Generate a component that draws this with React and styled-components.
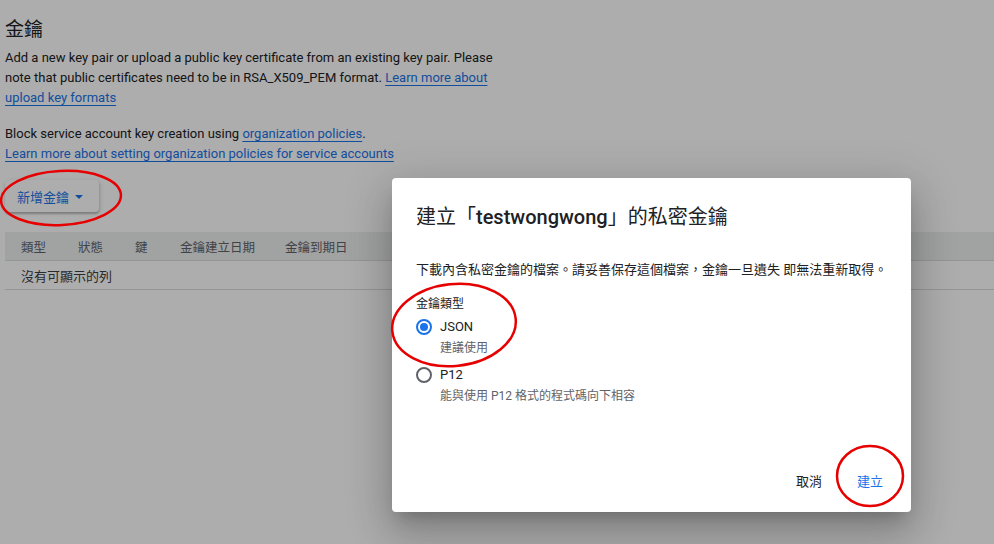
import styled, { createGlobalStyle } from 'styled-components'

const GlobalStyle = createGlobalStyle`
  html, body {
    margin: 0;
    padding: 0;
    background: #fff;
  }
  body {
    font-family: Roboto, "Noto Sans CJK TC", "Noto Sans", sans-serif;
    color: #202124;
    -webkit-font-smoothing: antialiased;
  }
`

const Page = styled.div`
  position: relative;
  width: 994px;
  height: 544px;
  overflow: hidden;
  padding: 15px 0 0 5px;
  box-sizing: border-box;
`

const Title = styled.h2`
  margin: 0 0 3px;
  font-size: 19px;
  font-weight: 400;
  line-height: 30px;
`

const Para = styled.p`
  margin: 0 0 16px;
  width: 500px;
  font-size: 13px;
  line-height: 20px;
`

const Link = styled.a`
  color: #1a73e8;
  text-decoration: underline;
  text-underline-offset: 3px;
`

const AddButton = styled.button`
  display: inline-flex;
  align-items: center;
  gap: 6px;
  height: 32px;
  margin: 0 0 20px;
  padding: 0 16px 0 12px;
  border: none;
  border-radius: 4px;
  background: #fff;
  color: #1a73e8;
  font-family: inherit;
  font-size: 13px;
  box-shadow: 0 2px 2px rgba(0, 0, 0, 0.2), 1px 1px 4px rgba(0, 0, 0, 0.15);
`

const Caret = styled.span`
  width: 0;
  height: 0;
  border-left: 4px solid transparent;
  border-right: 4px solid transparent;
  border-top: 4px solid currentColor;
  margin-top: 1px;
`

const Table = styled.div`
  display: flex;
  flex-direction: column;
`

const HeadRow = styled.div`
  display: flex;
  align-items: center;
  height: 28px;
  padding-left: 16px;
  background: #eef0f1;
  border-bottom: 1px solid #dadce0;
  color: #5f6368;
  font-size: 12.5px;
`

const HeadCell = styled.div`
  width: ${(p) => p.$w}px;
`

const BodyRow = styled.div`
  display: flex;
  align-items: center;
  height: 28px;
  padding-left: 16px;
  border-bottom: 1px solid #dadce0;
  color: #3c4043;
  font-size: 13px;
`

const Scrim = styled.div`
  position: absolute;
  inset: 0;
  background: rgba(0, 0, 0, 0.32);
`

const Dialog = styled.div`
  position: absolute;
  left: 392px;
  top: 178px;
  width: 519px;
  height: 334px;
  box-sizing: border-box;
  background: #fff;
  border-radius: 4px;
  padding: 24px 16px 0 24px;
  display: flex;
  flex-direction: column;
  box-shadow: 0 11px 15px -7px rgba(0, 0, 0, 0.2),
    0 24px 38px 3px rgba(0, 0, 0, 0.14), 0 9px 46px 8px rgba(0, 0, 0, 0.12);
`

const DialogTitle = styled.h3`
  margin: 0;
  font-size: 20px;
  font-weight: 400;
  line-height: 30px;
  color: #202124;
`

const Strong = styled.span`
  font-weight: 500;
`

const Desc = styled.p`
  margin: 28px 0 0;
  font-size: 13px;
  line-height: 20px;
  white-space: nowrap;
`

const GroupLabel = styled.div`
  margin-top: 16px;
  font-size: 12px;
  line-height: 16px;
`

const Options = styled.div`
  display: flex;
  flex-direction: column;
  gap: 7px;
  margin-top: 5px;
`

const Option = styled.label`
  display: grid;
  grid-template-columns: 24px 1fr;
  align-items: center;
`

const Radio = styled.span`
  width: 16px;
  height: 16px;
  box-sizing: border-box;
  border-radius: 50%;
  border: 2px solid ${(p) => (p.$on ? '#1a73e8' : '#5f6368')};
  display: flex;
  align-items: center;
  justify-content: center;

  &::after {
    content: '';
    width: 8px;
    height: 8px;
    border-radius: 50%;
    background: ${(p) => (p.$on ? '#1a73e8' : 'transparent')};
  }
`

const OptionName = styled.span`
  font-size: 13px;
  line-height: 20px;
  color: #202124;
`

const OptionHint = styled.span`
  grid-column: 2;
  margin-top: 1px;
  font-size: 12px;
  line-height: 20px;
  color: #5f6368;
`

const Actions = styled.div`
  margin-top: auto;
  display: flex;
  justify-content: flex-end;
  gap: 11px;
  padding-bottom: 14px;
`

const TextButton = styled.button`
  height: 36px;
  padding: 0 12px;
  border: none;
  background: transparent;
  font-family: inherit;
  font-size: 13px;
  color: ${(p) => (p.$primary ? '#1a73e8' : '#202124')};
`

const Marks = styled.svg`
  position: absolute;
  inset: 0;
  pointer-events: none;
`

const columns = [
  ['類型', 57],
  ['狀態', 57],
  ['鍵', 45],
  ['金鑰建立日期', 105],
  ['金鑰到期日', 120],
]

export default function App() {
  return (
    <>
      <GlobalStyle />
      <Page>
        <Title>金鑰</Title>
        <Para>
          Add a new key pair or upload a public key certificate from an existing key pair. Please
          note that public certificates need to be in RSA_X509_PEM format.{' '}
          <Link>Learn more about upload key formats</Link>
        </Para>
        <Para>
          Block service account key creation using <Link>organization policies</Link>.
          <br />
          <Link>Learn more about setting organization policies for service accounts</Link>
        </Para>
        <AddButton>
          新增金鑰
          <Caret />
        </AddButton>
        <Table>
          <HeadRow>
            {columns.map(([name, w]) => (
              <HeadCell key={name} $w={w}>
                {name}
              </HeadCell>
            ))}
          </HeadRow>
          <BodyRow>沒有可顯示的列</BodyRow>
        </Table>

        <Scrim />

        <Dialog>
          <DialogTitle>
            建立「<Strong>testwongwong</Strong>」的私密金鑰
          </DialogTitle>
          <Desc>下載內含私密金鑰的檔案。請妥善保存這個檔案，金鑰一旦遺失 即無法重新取得。</Desc>
          <GroupLabel>金鑰類型</GroupLabel>
          <Options>
            <Option>
              <Radio $on />
              <OptionName>JSON</OptionName>
              <OptionHint>建議使用</OptionHint>
            </Option>
            <Option>
              <Radio />
              <OptionName>P12</OptionName>
              <OptionHint>能與使用 P12 格式的程式碼向下相容</OptionHint>
            </Option>
          </Options>
          <Actions>
            <TextButton>取消</TextButton>
            <TextButton $primary>建立</TextButton>
          </Actions>
        </Dialog>

        {/* hand-drawn highlight rings */}
        <Marks width="994" height="544" viewBox="0 0 994 544">
          <g fill="none" stroke="#e60000" strokeWidth="2.5">
            <ellipse cx="61" cy="198" rx="60" ry="27" transform="rotate(-3 61 198)" />
            <ellipse cx="454" cy="325" rx="62" ry="41" transform="rotate(-6 454 325)" />
            <ellipse cx="870" cy="476" rx="33" ry="30" />
          </g>
        </Marks>
      </Page>
    </>
  )
}
